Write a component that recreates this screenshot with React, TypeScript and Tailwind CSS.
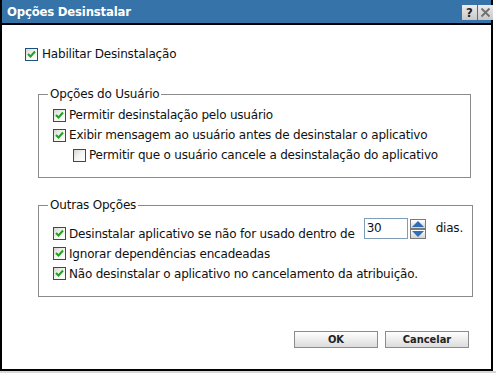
import React from "react";

const body = { fontFamily: '"DejaVu Sans", "Liberation Sans", sans-serif' };
const bold = { fontFamily: '"DejaVu Sans Condensed", "DejaVu Sans", sans-serif' };

function Check({ checked }: { checked: boolean }) {
  return (
    <span className="w-[13px] h-[13px] border border-[#1c5180] bg-gradient-to-br from-[#d6d6d0] via-[#f4f4f2] to-white flex items-center justify-center shrink-0">
      {checked && (
        <svg width="9" height="9" viewBox="0 0 9 9">
          <path d="M1 4 L3.5 6.5 L8 1.5" stroke="#21a121" strokeWidth="2" fill="none" />
        </svg>
      )}
    </span>
  );
}

function Row({ checked, children, className = "" }: { checked: boolean; children: React.ReactNode; className?: string }) {
  return (
    <div className={"flex items-center h-[20px] " + className}>
      <Check checked={checked} />
      <span className="ml-[3px] whitespace-nowrap">{children}</span>
    </div>
  );
}

function ArrowBtn({ up }: { up?: boolean }) {
  return (
    <div className="w-[16px] h-[10px] border border-[#7a7a7a] bg-gradient-to-b from-white to-[#d4d4d4] flex items-center justify-center">
      <svg width="12" height="6" viewBox="0 0 12 6">
        {up ? <path d="M0 6 L6 0 L12 6 Z" fill="#2f6db8" /> : <path d="M0 0 L12 0 L6 6 Z" fill="#2f6db8" />}
      </svg>
    </div>
  );
}

export default function App() {
  return (
    <div className="w-[496px] h-[373px] bg-white relative overflow-hidden text-[12px] text-[#111] tracking-[-0.2px]" style={body}>
      <div className="w-[493px] h-[371px] border-l-2 border-r-2 border-b-2 border-black flex flex-col bg-white">
        <div className="h-[23px] bg-[#3673a9] flex items-center justify-between border-b-2 border-black box-content">
          <span className="text-white font-bold text-[13px] ml-[5px] tracking-[-0.2px]" style={bold}>Opções Desinstalar</span>
          <div className="flex gap-[1px] mr-[-2px] mt-[1px]">
            <div className="w-[15px] h-[15px] bg-gradient-to-b from-[#ececec] to-[#c8c8c8] flex items-center justify-center text-[13px] font-bold text-[#222] leading-none tracking-normal" style={bold}>?</div>
            <div className="w-[15px] h-[15px] bg-gradient-to-b from-[#ececec] to-[#c8c8c8] flex items-center justify-center">
              <svg width="11" height="11" viewBox="0 0 11 11">
                <path d="M1.5 1.5 L9.5 9.5 M9.5 1.5 L1.5 9.5" stroke="#707070" strokeWidth="1.8" />
              </svg>
            </div>
          </div>
        </div>

        <div className="flex-1 flex flex-col pl-[23px] pr-[20px] pt-[19px]">
          <div className="flex items-center h-[20px]">
            <Check checked />
            <span className="ml-[4px]">Habilitar Desinstalação</span>
          </div>

          <fieldset className="ml-[13px] mt-[22px] border border-[#8a8a8a] px-[9px] pt-[3px] pb-[12px]">
            <legend className="px-[2px] leading-[16px]">Opções do Usuário</legend>
            <div className="pl-[5px] flex flex-col">
              <Row checked>Permitir desinstalação pelo usuário</Row>
              <Row checked>Exibir mensagem ao usuário antes de desinstalar o aplicativo</Row>
              <Row checked={false} className="ml-[20px]">Permitir que o usuário cancele a desinstalação do aplicativo</Row>
            </div>
          </fieldset>

          <fieldset className="ml-[13px] mt-[19px] border border-[#8a8a8a] px-[9px] pt-[4.5px] pb-[12px]">
            <legend className="px-[2px] leading-[16px]">Outras Opções</legend>
            <div className="pl-[5px] flex flex-col">
              <div className="flex h-[26px]">
                <div className="self-end flex items-center h-[20px]">
                  <Check checked />
                  <span className="ml-[3px] whitespace-nowrap">Desinstalar aplicativo se não for usado dentro de</span>
                </div>
                <div className="flex items-start ml-[9px]">
                  <div className="w-[44px] h-[21px] border border-[#7f9db9] bg-white pl-[2px] leading-[19px]">30</div>
                  <div className="flex flex-col ml-[2px] mt-[1px]">
                    <ArrowBtn up />
                    <ArrowBtn />
                  </div>
                </div>
                <span className="ml-[10px] h-[21px] flex items-center">dias.</span>
              </div>
              <Row checked className="h-[19.5px]">Ignorar dependências encadeadas</Row>
              <Row checked className="h-[19.5px]">Não desinstalar o aplicativo no cancelamento da atribuição.</Row>
            </div>
          </fieldset>

          <div className="flex justify-end gap-[7px] mt-[34.5px] mr-[2px]">
            <button className="w-[84px] h-[17px] border border-[#8c8c8c] bg-gradient-to-b from-white to-[#dcdcdc] text-[11px] font-bold text-[#222] leading-none tracking-normal" style={bold}>OK</button>
            <button className="w-[84px] h-[17px] border border-[#8c8c8c] bg-gradient-to-b from-white to-[#dcdcdc] text-[11px] font-bold text-[#222] leading-none tracking-normal" style={bold}>Cancelar</button>
          </div>
        </div>
      </div>
      <div className="absolute left-0 right-0 bottom-0 h-[2px] bg-[#d8d8d8]" />
    </div>
  );
}
